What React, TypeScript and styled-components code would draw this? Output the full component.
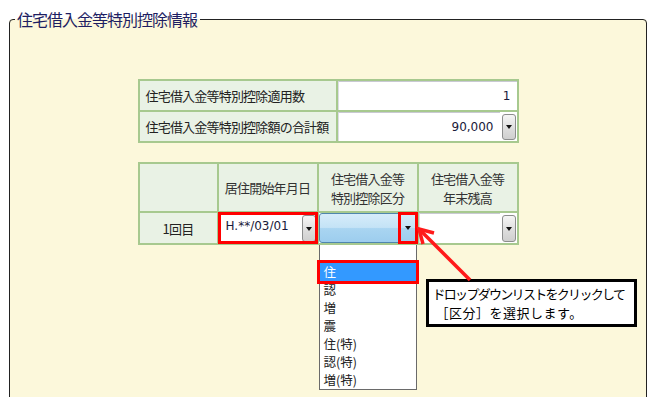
import React from 'react';
import styled, { createGlobalStyle, css } from 'styled-components';

const GlobalStyle = createGlobalStyle`
  html, body {
    margin: 0;
    padding: 0;
    background: #ffffff;
    overflow: hidden;
  }
  body {
    font-family: "Noto Sans CJK JP", "Noto Sans", sans-serif;
    color: #222;
  }
`;

const GREEN = '#a7c98f';
const HEAD_BG = '#e9f2e5';

const Frame = styled.fieldset`
  margin: 9px 12px 0 9px;
  padding: 50px 0 0 0;
  min-height: 420px;
  border: 1px solid #222;
  border-radius: 4px;
  background: #fcf8db;
  display: flex;
  flex-direction: column;
  align-items: center;
`;

const Legend = styled.legend`
  margin-left: 5px;
  padding: 0 3px 0 2px;
  font-size: 16px;
  line-height: 20px;
  letter-spacing: -1px;
  color: #1e1e62;
`;

const Grid = styled.div<{ $cols: string; $rows: string }>`
  display: grid;
  grid-template-columns: ${(p) => p.$cols};
  grid-template-rows: ${(p) => p.$rows};
  gap: 2px;
  padding: 2px;
  background: ${GREEN};
  position: relative;
`;

const SummaryGrid = styled(Grid)``;

const DetailGrid = styled(Grid)`
  margin-top: 19px;
`;

const Cell = styled.div<{ $center?: boolean; $head?: boolean }>`
  position: relative;
  display: flex;
  align-items: center;
  background: ${HEAD_BG};
  font-size: 13px;
  letter-spacing: -0.8px;
  line-height: 19px;
  padding: 0 6px;
  ${(p) =>
    p.$center &&
    css`
      justify-content: center;
      text-align: center;
    `}
  ${(p) =>
    p.$head &&
    css`
      color: #333;
    `}
`;

const FieldCell = styled.div<{ $mark?: boolean }>`
  position: relative;
  display: flex;
  background: #ffffff;
  ${(p) =>
    p.$mark &&
    css`
      outline: 3px solid #ff0000;
      outline-offset: -2px;
      z-index: 2;
    `}
`;

const Field = styled.div<{ $align?: 'left' | 'right' }>`
  flex: 1;
  display: flex;
  align-items: center;
  justify-content: ${(p) => (p.$align === 'left' ? 'flex-start' : 'flex-end')};
  padding: 0 6px;
  border-top: 1px solid #c9c9d3;
  border-left: 1px solid #dcdce4;
  font-family: "DejaVu Sans", "Noto Sans CJK JP", sans-serif;
  font-size: 12px;
  color: #1a1a3a;
`;

const TopField = styled(Field)`
  align-items: flex-start;
  padding-top: 5px;
`;

const DropButton = styled.span`
  flex: none;
  width: 12px;
  margin: 2px 1px 1px 2px;
  border: 1px solid #8c8d8d;
  border-radius: 3px;
  background: linear-gradient(#f6f6f6, #dcdcdc 60%, #cfcfcf);
  display: flex;
  align-items: center;
  justify-content: center;
  &::after {
    content: '';
    border-left: 3px solid transparent;
    border-right: 3px solid transparent;
    border-top: 4px solid #111;
  }
`;

const BlueSelect = styled.div`
  flex: 1;
  display: flex;
  justify-content: flex-end;
  border: 1px solid #4f86ad;
  border-radius: 3px;
  background: linear-gradient(#d6ecfa 0%, #c4e3f6 48%, #a9d5f1 52%, #9dcdee 100%);
`;

const ArrowZone = styled.span`
  width: 18px;
  margin: -1px -1px -1px 0;
  display: flex;
  align-items: center;
  justify-content: center;
  outline: 3px solid #ff0000;
  outline-offset: -2px;
  &::after {
    content: '';
    border-left: 3px solid transparent;
    border-right: 3px solid transparent;
    border-top: 4px solid #111;
  }
`;

const ListBox = styled.ul`
  position: absolute;
  top: calc(100% + 2px);
  left: 0;
  width: 98px;
  margin: 0;
  padding: 0;
  list-style: none;
  background: #ffffff;
  border: 1px solid #6a6a6a;
  border-top: none;
  box-sizing: border-box;
  z-index: 5;
`;

const ListItem = styled.li<{ $active?: boolean }>`
  height: 18px;
  line-height: 18px;
  padding-left: 4px;
  font-size: 12.5px;
  color: #222;
  ${(p) =>
    p.$active &&
    css`
      background: #3399ff;
      color: #ffffff;
      outline: 3px solid #ff0000;
      outline-offset: 0px;
    `}
`;

const Callout = styled.div`
  position: absolute;
  left: 288px;
  top: 117px;
  width: 201px;
  padding: 2px 0 2px 4px;
  background: #ffffff;
  border: 3px solid #000;
  color: #000;
  z-index: 6;
`;

const CalloutLine = styled.div<{ $tight?: boolean }>`
  font-size: 13px;
  line-height: 19px;
  white-space: nowrap;
  letter-spacing: ${(p) => (p.$tight ? '-1.7px' : '0.5px')};
  padding-left: ${(p) => (p.$tight ? '0' : '3px')};
`;

const Pointer = styled.svg`
  position: absolute;
  left: 270px;
  top: 60px;
  overflow: visible;
  z-index: 7;
`;

const options = ['', '住', '認', '増', '震', '住(特)', '認(特)', '増(特)'];

const App = () => {
  return (
    <>
      <GlobalStyle />
      <Frame>
        <Legend>住宅借入金等特別控除情報</Legend>

        <SummaryGrid $cols="196px 179px" $rows="29px 29px">
          <Cell>住宅借入金等特別控除適用数</Cell>
          <FieldCell>
            <Field>1</Field>
          </FieldCell>
          <Cell>住宅借入金等特別控除額の合計額</Cell>
          <FieldCell>
            <Field>90,000</Field>
            <DropButton />
          </FieldCell>
        </SummaryGrid>

        <DetailGrid $cols="77px 98px 98px 98px" $rows="47px 30px">
          <Cell $head />
          <Cell $head $center>
            居住開始年月日
          </Cell>
          <Cell $head $center>
            住宅借入金等
            <br />
            特別控除区分
          </Cell>
          <Cell $head $center>
            住宅借入金等
            <br />
            年末残高
          </Cell>

          <Cell $center>1回目</Cell>
          <FieldCell $mark>
            <TopField $align="left">H.**/03/01</TopField>
            <DropButton />
          </FieldCell>
          <FieldCell>
            <BlueSelect>
              <ArrowZone />
            </BlueSelect>
            <ListBox>
              {options.map((o, i) => (
                <ListItem key={i} $active={i === 1}>
                  {o}
                </ListItem>
              ))}
            </ListBox>
          </FieldCell>
          <FieldCell>
            <Field />
            <DropButton />
          </FieldCell>

          <Pointer width="70" height="70">
            <line x1="62" y1="58" x2="12" y2="8" stroke="#ff1a1a" strokeWidth="3.5" />
            <polyline
              points="26,11 11,7 15,22"
              fill="none"
              stroke="#ff1a1a"
              strokeWidth="3.5"
              strokeLinejoin="miter"
            />
          </Pointer>
          <Callout>
            <CalloutLine $tight>ドロップダウンリストをクリックして</CalloutLine>
            <CalloutLine>［区分］を選択します。</CalloutLine>
          </Callout>
        </DetailGrid>
      </Frame>
    </>
  );
};

export default App;
